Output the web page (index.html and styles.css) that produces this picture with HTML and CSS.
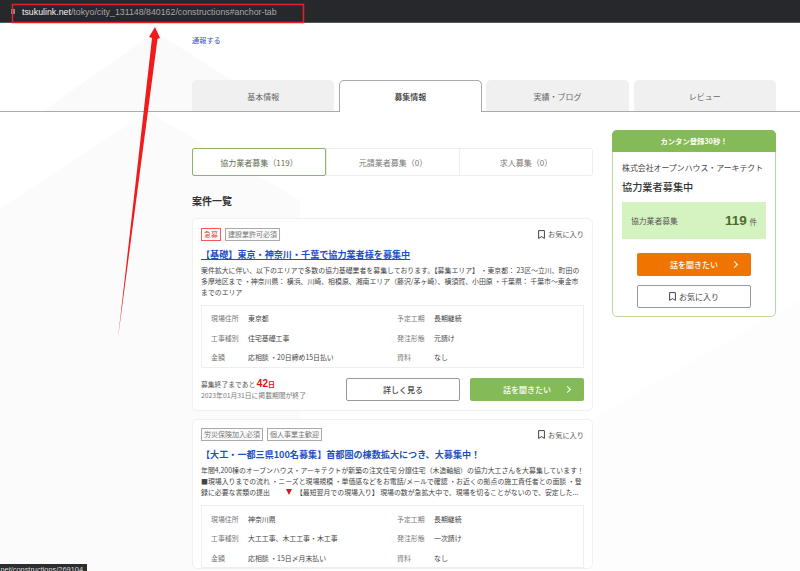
FILE: index.html
```html
<!DOCTYPE html>
<html lang="ja">
<head>
  <meta charset="UTF-8" />
  <meta name="viewport" content="width=device-width, initial-scale=1.0" />
  <title>協力業者募集</title>
  <link rel="stylesheet" href="styles.css">
</head>
<body>
  <svg class="bg-shapes" width="800" height="571" viewBox="0 0 800 571">
    <polygon points="43,111 155,32 232,80 232,111" fill="#fafafa" />
    <polygon points="0,208 148,112 300,200 300,571 0,571" fill="#fbfbfb" />
    <polygon points="590,420 800,300 800,571 590,571" fill="#fdfdfd" />
  </svg>

  <div class="urlbar">
    <span class="lock"></span>
    <span class="url"><b>tsukulink.net</b>/tokyo/city_131148/840162/constructions#anchor-tab</span>
  </div>

  <div class="report"><a href="#">通報する</a></div>

  <div class="tabs">
    <div class="tab">基本情報</div>
    <div class="tab active">募集情報</div>
    <div class="tab">実績・ブログ</div>
    <div class="tab">レビュー</div>
  </div>

  <div class="content">
    <main class="main">
      <div class="subtabs">
        <div class="subtab on">協力業者募集（119）</div>
        <div class="subtab">元請業者募集（0）</div>
        <div class="subtab">求人募集（0）</div>
      </div>

      <h2 class="list-title">案件一覧</h2>

      <section class="card">
        <div class="card-top">
          <span class="tag urgent">急募</span>
          <span class="tag">建設業許可必須</span>
          <span class="fav">
            <svg class="mark" width="7" height="9" viewBox="0 0 7 9"><path d="M.6.6h5.8v7.8L3.5 6.6.6 8.4z" fill="none" stroke="#444" stroke-width="1" /></svg>
            お気に入り
          </span>
        </div>
        <a class="card-title under" href="#">【基礎】東京・神奈川・千葉で協力業者様を募集中</a>
        <p class="desc">案件拡大に伴い、以下のエリアで多数の協力基礎業者を募集しております。【募集エリア】 ・東京都： 23区〜立川、町田の多摩地区まで ・神奈川県： 横浜、川崎、相模原、湘南エリア（藤沢/茅ヶ崎）、横須賀、小田原 ・千葉県： 千葉市〜東金市までのエリア</p>
        <div class="info">
          <div class="row"><span class="k">現場住所</span><span class="v">東京都</span></div>
          <div class="row"><span class="k">予定工期</span><span class="v">長期継続</span></div>
          <div class="row"><span class="k">工事種別</span><span class="v">住宅基礎工事</span></div>
          <div class="row"><span class="k">発注形態</span><span class="v">元請け</span></div>
          <div class="row"><span class="k">金額</span><span class="v">応相談 ・20日締め15日払い</span></div>
          <div class="row"><span class="k">資料</span><span class="v">なし</span></div>
        </div>
        <div class="card-foot">
          <div class="deadline">
            <div>募集終了まであと <b>42</b><b class="day">日</b></div>
            <div class="date">2023年01月31日に掲載期間が終了</div>
          </div>
          <a class="btn white" href="#">詳しく見る</a>
          <a class="btn green" href="#">話を聞きたい<i class="chev"></i></a>
        </div>
      </section>

      <section class="card last">
        <div class="card-top">
          <span class="tag">労災保険加入必須</span>
          <span class="tag">個人事業主歓迎</span>
          <span class="fav">
            <svg class="mark" width="7" height="9" viewBox="0 0 7 9"><path d="M.6.6h5.8v7.8L3.5 6.6.6 8.4z" fill="none" stroke="#444" stroke-width="1" /></svg>
            お気に入り
          </span>
        </div>
        <a class="card-title" href="#">【大工・一都三県100名募集】首都圏の棟数拡大につき、大募集中！</a>
        <p class="desc nowrap">年間4,200棟のオープンハウス・アーキテクトが新築の注文住宅 分譲住宅（木造軸組）の協力大工さんを大募集しています！<br>■現場入りまでの流れ ・ニーズと現場規模 ・単価感などをお電話/メールで確認 ・お近くの拠点の施工責任者との面談 ・登<br>録に必要な書類の提出<span class="tri"></span>【最短翌月での現場入り】 現場の数が急拡大中で、現場を切ることがないので、安定した...</p>
        <div class="info">
          <div class="row"><span class="k">現場住所</span><span class="v">神奈川県</span></div>
          <div class="row"><span class="k">予定工期</span><span class="v">長期継続</span></div>
          <div class="row"><span class="k">工事種別</span><span class="v">大工工事、木工工事・木工事</span></div>
          <div class="row"><span class="k">発注形態</span><span class="v">一次請け</span></div>
          <div class="row"><span class="k">金額</span><span class="v">応相談 ・15日〆月末払い</span></div>
          <div class="row"><span class="k">資料</span><span class="v">なし</span></div>
        </div>
      </section>
    </main>

    <aside class="side">
      <div class="side-head">カンタン登録30秒！</div>
      <div class="side-body">
        <div class="company">株式会社オープンハウス・アーキテクト</div>
        <div class="side-title">協力業者募集中</div>
        <div class="count-box">
          <span>協力業者募集</span>
          <span class="count"><b>119</b> 件</span>
        </div>
        <a class="btn orange" href="#">話を聞きたい<i class="chev"></i></a>
        <a class="btn white fav-btn" href="#">
          <svg class="mark" width="7" height="9" viewBox="0 0 7 9"><path d="M.6.6h5.8v7.8L3.5 6.6.6 8.4z" fill="none" stroke="#444" stroke-width="1" /></svg>
          お気に入り
        </a>
      </div>
    </aside>
  </div>

  <div class="status"><span>.net/constructions/269104</span></div>

  <svg class="note" width="800" height="571" viewBox="0 0 800 571">
    <rect x="12.5" y="4.5" width="291" height="18" fill="none" stroke="#e8202a" stroke-width="1.5" />
    <polygon points="118,338 152,38 149,37 155,27 160,38 157.5,39" fill="#f01c1c" />
  </svg>
</body>
</html>
```

FILE: styles.css
```css
* {
  box-sizing: border-box;
}
html, body {
  margin: 0;
  height: 571px;
  overflow: hidden;
}
body {
  position: relative;
  font-family: "Noto Sans CJK JP", "Noto Sans", sans-serif;
  background-color: #fff;
  color: #333;
  font-size: 7px;
}
a {
  text-decoration: none;
}
.bg-shapes,
.note {
  position: absolute;
  top: 0;
  left: 0;
  pointer-events: none;
}
.urlbar {
  position: relative;
  height: 23px;
  background-color: #27282c;
  color: #a5a7ab;
  font-family: "Liberation Sans", Arial, sans-serif;
  font-size: 8.8px;
  line-height: 24px;
  padding-left: 22px;
  border-bottom: 1px solid #55565a;
}
.urlbar b {
  color: #f2f2f2;
  font-weight: normal;
}
.lock {
  position: absolute;
  left: 11px;
  top: 9px;
  width: 4px;
  height: 5px;
  background-color: #8b8d90;
}
.report {
  position: relative;
  padding: 11px 0 0 192px;
  height: 57px;
  font-size: 7.2px;
  line-height: 12px;
}
.report a {
  color: #3f52c4;
}
.tabs {
  position: relative;
  display: flex;
  gap: 4.8px;
  height: 32px;
  padding-left: 192px;
  border-bottom: 1px solid #aaa;
}
.tab {
  width: 142.4px;
  height: 31px;
  background-color: #f0f0f0;
  border-radius: 5px 5px 0 0;
  text-align: center;
  font-size: 8px;
  line-height: 33px;
  color: #666;
}
.tab.active {
  height: 32px;
  background-color: #fff;
  border: 1px solid #aaa;
  border-bottom: none;
  color: #333;
  font-weight: 500;
  line-height: 31px;
}
.content {
  position: relative;
  display: flex;
  gap: 19px;
  padding: 36px 0 0 192px;
}
.main {
  width: 401px;
}
.subtabs {
  display: flex;
  height: 28px;
  background-color: #fff;
  border: 1px solid #eee;
  border-radius: 3px;
}
.subtab {
  flex: 1;
  text-align: center;
  font-size: 8px;
  line-height: 27px;
  color: #777;
  border-left: 1px solid #eee;
}
.subtab.on {
  margin: -1px 0 -1px -1px;
  border: 1px solid #8bb56d;
  border-radius: 2px;
  color: #5d6f52;
  line-height: 27px;
}
.list-title {
  margin: 0;
  padding-top: 17px;
  height: 42px;
  font-size: 10px;
  line-height: 16px;
  font-weight: 700;
  color: #333;
}
.card {
  background-color: #fff;
  border: 1px solid #f0f0f0;
  border-radius: 5px;
  padding: 9px 8px 9px 8px;
  margin-bottom: 8px;
}
.card.last {
  padding-bottom: 0;
  margin-bottom: 0;
}
.card-top {
  display: flex;
  align-items: center;
  gap: 4px;
  height: 12.5px;
}
.tag {
  border: 1px solid #aaa;
  height: 13px;
  padding: 0 2px;
  font-size: 7px;
  line-height: 11px;
  color: #777;
  background-color: #fbfbfb;
}
.tag.urgent {
  border-color: #f25c54;
  color: #e8453c;
  background-color: #fff;
}
.fav {
  margin-left: auto;
  display: flex;
  align-items: center;
  gap: 3px;
  font-size: 7.2px;
  color: #555;
}
.card-title {
  display: block;
  margin-top: 6px;
  font-size: 9.1px;
  line-height: 15px;
  font-weight: 700;
  color: #1d4fc4;
  white-space: nowrap;
}
.card-title.under {
  text-decoration: underline;
}
.desc {
  margin: 3px 0 7px;
  font-size: 6.9px;
  line-height: 11px;
  color: #444;
}
.desc.nowrap {
  white-space: nowrap;
}
.tri {
  display: inline-block;
  width: 0;
  height: 0;
  margin: 0 4px 0 16px;
  border-left: 3.5px solid transparent;
  border-right: 3.5px solid transparent;
  border-top: 6px solid #c81e1e;
}
.info {
  display: grid;
  grid-template-columns: 186px 1fr;
  padding: 3px 9px 0;
  background-color: #fff;
  border: 1px solid #eee;
}
.row {
  display: flex;
  height: 19.4px;
  align-items: center;
  font-size: 6.9px;
}
.k {
  width: 37px;
  color: #777;
}
.v {
  color: #444;
}
.card-foot {
  display: flex;
  align-items: center;
  gap: 10px;
  margin-top: 10px;
}
.deadline {
  flex: 1;
  font-size: 6.8px;
  line-height: 11px;
  color: #555;
}
.deadline b {
  font-family: "Liberation Sans", Arial, sans-serif;
  font-size: 10px;
  color: #e01010;
}
.deadline b.day {
  font-family: inherit;
  font-size: 7px;
}
.date {
  color: #777;
}
.btn {
  position: relative;
  display: block;
  width: 114px;
  height: 23px;
  border-radius: 2px;
  text-align: center;
  font-size: 8px;
  line-height: 23px;
  font-weight: 500;
}
.btn.white {
  background-color: #fff;
  border: 1px solid #999;
  color: #444;
  line-height: 21px;
}
.btn.green {
  background-color: #85bb57;
  color: #fff;
}
.btn.orange {
  background-color: #f07500;
  color: #fff;
  margin: 0 auto 9px;
}
.chev {
  position: absolute;
  right: 14px;
  top: 9px;
  width: 5px;
  height: 5px;
  border-top: 1px solid #fff;
  border-right: 1px solid #fff;
  transform: rotate(45deg);
}
.side {
  width: 164px;
  height: 187px;
  margin-top: -18px;
  background-color: #fff;
  border: 1px solid #b8d99a;
  border-radius: 5px;
}
.side-head {
  margin: -1px -1px 0;
  height: 22px;
  background-color: #85bb57;
  border-radius: 5px 5px 0 0;
  color: #fff;
  text-align: center;
  font-size: 7.3px;
  font-weight: 700;
  line-height: 22px;
}
.side-body {
  padding: 10px 9px 0;
}
.company {
  font-size: 7.9px;
  line-height: 12px;
  color: #444;
  white-space: nowrap;
}
.side-title {
  margin-top: 6px;
  font-size: 10.2px;
  line-height: 14px;
  font-weight: 500;
  color: #333;
}
.count-box {
  display: flex;
  justify-content: space-between;
  align-items: center;
  height: 37px;
  margin-top: 8px;
  margin-bottom: 14px;
  padding: 0 9px;
  background-color: #d5f3c0;
  font-size: 7.8px;
  color: #555;
}
.count {
  font-size: 7.5px;
}
.count b {
  font-family: "Liberation Sans", Arial, sans-serif;
  font-size: 13.5px;
  font-weight: 700;
  color: #4d6b30;
  margin-right: 1px;
}
.fav-btn {
  display: flex;
  justify-content: center;
  align-items: center;
  gap: 3px;
  margin: 0 auto;
  font-weight: 400;
}
.status {
  position: absolute;
  left: 0;
  bottom: 0;
  width: 87px;
  height: 7px;
  display: flex;
  justify-content: flex-end;
  padding-right: 4px;
  overflow: hidden;
  background-color: #2c2d31;
  color: #ddd;
  font-family: "Liberation Sans", Arial, sans-serif;
  font-size: 7.4px;
  line-height: 12px;
  white-space: nowrap;
}
```
